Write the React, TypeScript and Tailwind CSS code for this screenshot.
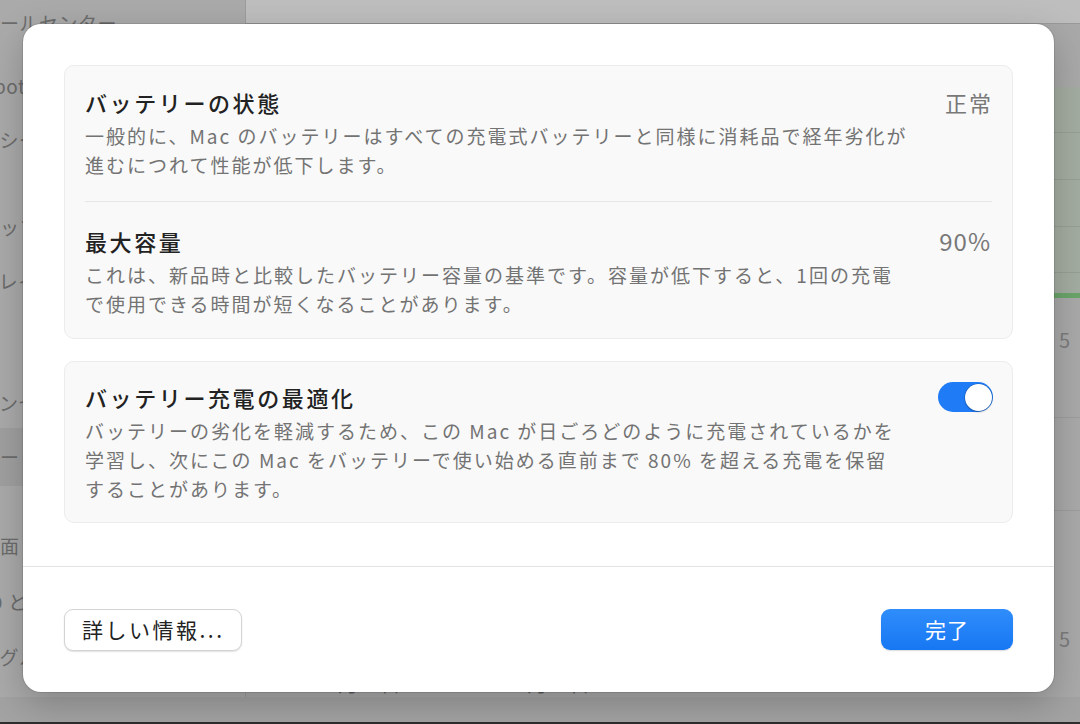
import type { ReactNode } from 'react';

/** macOS「バッテリーの状態」sheet over the dimmed System Settings window. */

const SIDEBAR = [
  { label: 'コントロールセンター', cls: '-mt-[4px] h-[54px]' },
  { label: 'Siri と Spotlight', cls: 'mt-[9px] h-[54px]' },
  { label: 'プライバシーとセキュリティ', cls: 'h-[54px]' },
  { label: 'デスクトップと Dock', cls: 'mt-[33px] h-[54px]' },
  { label: 'ディスプレイ', cls: 'h-[54px]' },
  { label: '壁紙', cls: 'mt-[3px] h-[54px]' },
  { label: 'スクリーンセーバ', cls: 'mt-[11px] h-[54px]' },
  { label: 'バッテリー', cls: '-mt-[2px] h-[58px] bg-[#a0a0a0]' },
  { label: 'ロック画面', cls: 'mt-[33px] h-[54px]' },
  { label: 'Touch ID とパスワード', cls: 'mt-[2px] h-[54px]' },
  { label: 'ユーザとグループ', cls: 'mt-[1px] h-[54px]' },
];

function Backdrop() {
  return (
    <div className="flex h-full flex-col">
      <div className="flex h-[697px] shrink-0">
        <aside className="w-[246px] shrink-0 overflow-hidden border-r border-[#9c9c9c] bg-[#aaaaaa]">
          <div className="-ml-[78px] flex flex-col">
            {SIDEBAR.map((s) => (
              <div
                key={s.label}
                className={`flex shrink-0 items-center whitespace-nowrap rounded-md text-[19px] tracking-[0.5px] text-[#6c6c6c] ${s.cls}`}
              >
                {s.label}
              </div>
            ))}
          </div>
        </aside>

        <main className="flex min-w-0 flex-1 flex-col bg-[#a9a9a9]">
          <div className="h-[24px] shrink-0 border-b border-[#9a9a9a] bg-[#bebebe]" />
          <div className="mt-[63px] flex flex-col bg-[#a4ada1]">
            <div className="h-[46px] border-b border-[#97a094]" />
            <div className="h-[47px] border-b border-[#97a094]" />
            <div className="h-[47px] border-b border-[#97a094]" />
            <div className="h-[46px] border-b border-[#97a094]" />
            <div className="h-[20px]" />
            <div className="h-[5px] bg-[#6ba56b]" />
          </div>
          <div className="mt-[31px] flex justify-end pr-[10px] text-[20px] leading-[22px] text-[#7c7c7c]">5</div>
          <div className="mt-[66px] h-px bg-[#9d9d9d]" />
          <div className="mt-[92px] h-px bg-[#9d9d9d]" />
          <div className="mt-[117px] flex justify-end pr-[10px] text-[20px] leading-[22px] text-[#7c7c7c]">5</div>
          <div className="mt-auto flex gap-[105px] pb-[1px] pl-[70px] text-[20px] leading-[24px] text-[#5f5f5f]">
            <span>12月26日</span>
            <span>12月27日</span>
          </div>
        </main>
      </div>
      <div className="h-[25px] shrink-0 bg-[#a3a3a3]" />
      <div className="h-[2px] shrink-0 bg-[#2e2e2e]" />
    </div>
  );
}

function Toggle() {
  return (
    <div className="flex h-[30px] w-[55px] shrink-0 items-center justify-end rounded-full bg-[#1f7bf6] px-[1.5px]">
      <div className="h-[27px] w-[27px] rounded-full bg-white shadow-[0_0_0_0.5px_rgba(0,0,0,0.18),0_1px_2px_rgba(0,0,0,0.25)]" />
    </div>
  );
}

function Row({
  title,
  lines,
  right,
  className = '',
}: {
  title: string;
  lines: string[];
  right: ReactNode;
  className?: string;
}) {
  return (
    <div className={`flex items-start justify-between pl-[20px] pr-[19px] ${className}`}>
      <div className="min-w-0">
        <div className="text-[22px] font-medium leading-[30px] tracking-[2.6px] text-[#222222]">{title}</div>
        <p className="mt-[4px] whitespace-nowrap text-[19px] leading-[29px] tracking-[2px] text-[#737373]">
          {lines.map((l) => (
            <span key={l} className="block">
              {l}
            </span>
          ))}
        </p>
      </div>
      {right}
    </div>
  );
}

function Value({ children, className = '' }: { children: ReactNode; className?: string }) {
  return <span className={`shrink-0 leading-[30px] text-[#787878] ${className}`}>{children}</span>;
}

export default function App() {
  return (
    <div className="relative h-[724px] w-[1080px] overflow-hidden bg-[#a9a9a9] font-['Noto_Sans_CJK_JP','Noto_Sans',sans-serif]">
      <Backdrop />

      <div className="absolute left-[23px] top-[24px] flex h-[668px] w-[1031px] flex-col rounded-[18px] bg-white shadow-[0_0_0_1px_rgba(0,0,0,0.1),0_12px_36px_rgba(0,0,0,0.22)]">
        <div className="flex flex-col gap-[22px] px-[41px] pt-[41px]">
          <section className="rounded-[10px] border border-[#ececec] bg-[#f9f9f9]">
            <Row
              className="pt-[21px] pb-[22px]"
              title="バッテリーの状態"
              lines={[
                '一般的に、Mac のバッテリーはすべての充電式バッテリーと同様に消耗品で経年劣化が',
                '進むにつれて性能が低下します。',
              ]}
              right={<Value className="text-[22px] tracking-[2px]">正常</Value>}
            />
            <div className="mx-[20px] h-px bg-[#e6e6e6]" />
            <Row
              className="pt-[24px] pb-[20px]"
              title="最大容量"
              lines={[
                'これは、新品時と比較したバッテリー容量の基準です。容量が低下すると、1回の充電',
                'で使用できる時間が短くなることがあります。',
              ]}
              right={<Value className="mr-[2px] text-[24px] tracking-[1px]">90%</Value>}
            />
          </section>

          <section className="rounded-[10px] border border-[#ececec] bg-[#f9f9f9]">
            <Row
              className="pt-[20px] pb-[19px]"
              title="バッテリー充電の最適化"
              lines={[
                'バッテリーの劣化を軽減するため、この Mac が日ごろどのように充電されているかを',
                '学習し、次にこの Mac をバッテリーで使い始める直前まで 80% を超える充電を保留',
                'することがあります。',
              ]}
              right={<Toggle />}
            />
          </section>
        </div>

        <div className="mt-[43px] h-px bg-[#e3e3e3]" />

        <div className="flex flex-1 items-center justify-between px-[41px]">
          <button className="flex h-[42px] w-[178px] items-center rounded-[9px] border border-[#d4d4d4] bg-white pl-[17px] text-[21px] tracking-[2.5px] text-[#222222] shadow-[0_1px_1.5px_rgba(0,0,0,0.12)]">
            詳しい情報...
          </button>
          <button className="flex h-[41px] w-[132px] items-center justify-center rounded-[9px] bg-gradient-to-b from-[#2f8dfb] to-[#1677f3] text-[21px] tracking-[1px] text-white shadow-[0_1px_1.5px_rgba(0,0,0,0.15)]">
            完了
          </button>
        </div>
      </div>
    </div>
  );
}
